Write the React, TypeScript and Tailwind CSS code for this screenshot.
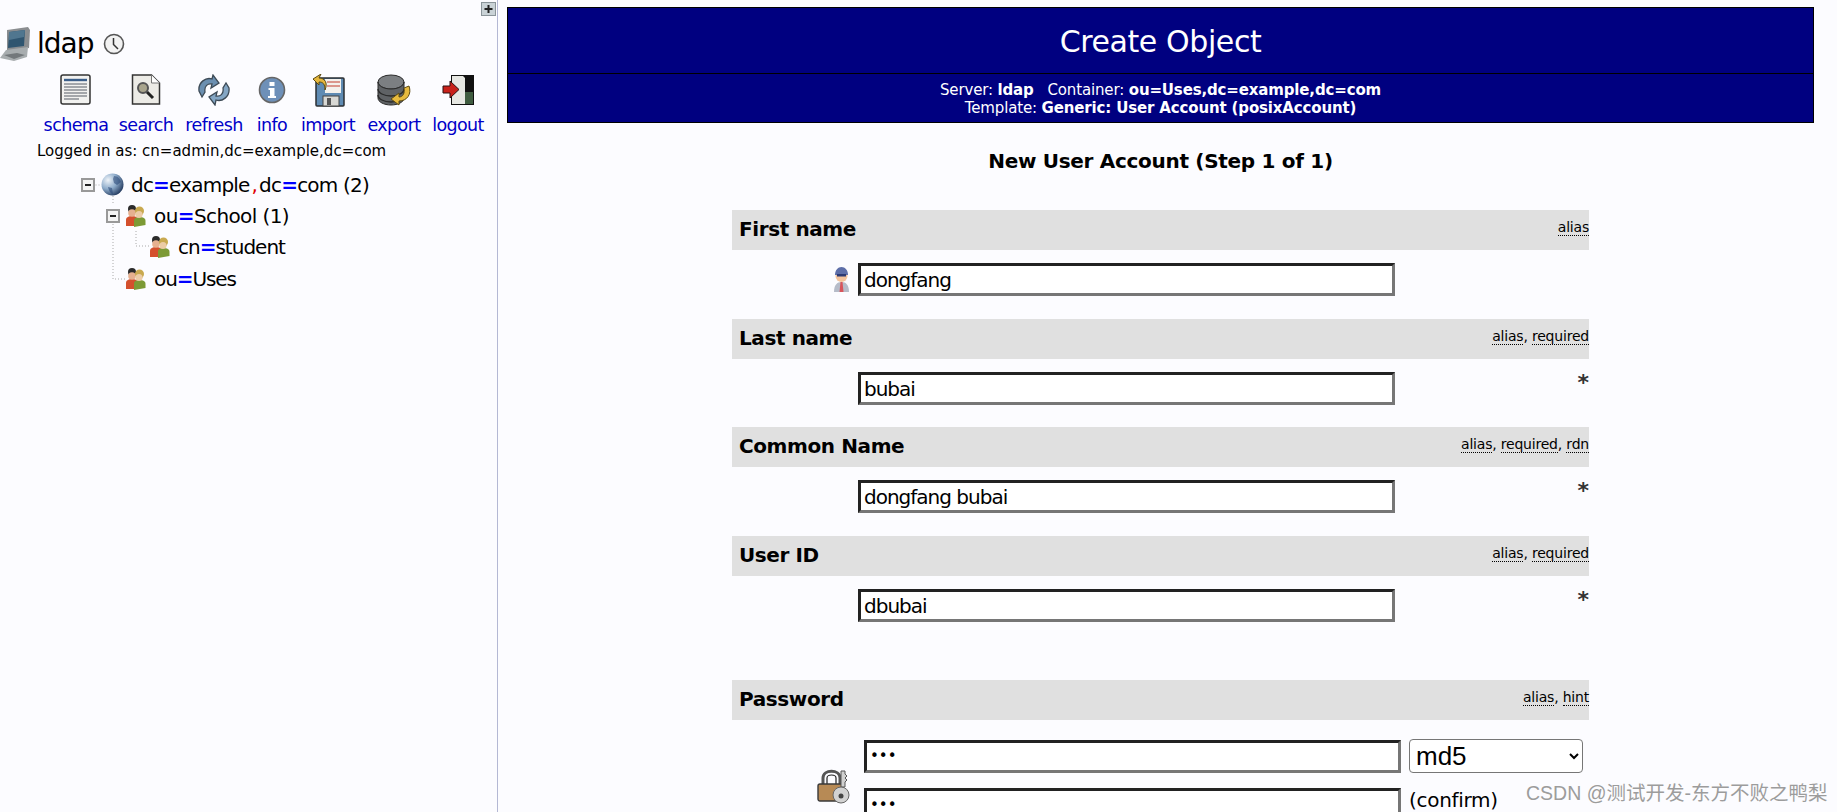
const sans = "font-['DejaVu_Sans',sans-serif]";

function PlusBox() {
  return (
    <svg width="15" height="14" viewBox="0 0 15 14">
      <rect x="0.5" y="0.5" width="14" height="13" fill="#c9d2d6" stroke="#8a9499" />
      <path d="M7.5 3v8M3.5 7h8" stroke="#222" strokeWidth="2" />
    </svg>
  );
}

function Computer() {
  return (
    <svg width="31" height="36" viewBox="0 0 31 36">
      <path d="M7 4 28 1 30 4 29 22 7 25Z" fill="#8a8d90" />
      <path d="M9 6 25 4 24 20 8 22Z" fill="#2f5570" />
      <path d="M9 6 25 4 24 11 9 14Z" fill="#50768f" />
      <path d="M6 24 28 21 27 31 14 35 0 32Z" fill="#a8adaf" />
      <path d="M4 29 17 27 25 29 14 33Z" fill="#73787b" />
    </svg>
  );
}

function Clock() {
  return (
    <svg width="22" height="22" viewBox="0 0 22 22">
      <circle cx="11" cy="11" r="9.500" fill="#f2f2f2" stroke="#555" strokeWidth="1.6" />
      <path d="M10.500 5v6.500l4.500 4.500" fill="none" stroke="#333" strokeWidth="1.5" />
    </svg>
  );
}

function SchemaIcon() {
  return (
    <svg width="32" height="32" viewBox="0 0 32 32">
      <rect x="1" y="1" width="29" height="29" rx="2" fill="#f2f2f0" stroke="#333" strokeWidth="1.5" />
      <path d="M4 6h23" stroke="#3b5f8a" strokeWidth="2.4" />
      <path d="M4 10h23M4 13h23M4 16h23M4 19h23M4 22h23M4 25h15" stroke="#8b8f94" strokeWidth="1.4" />
    </svg>
  );
}

function SearchIcon() {
  return (
    <svg width="30" height="32" viewBox="0 0 30 32">
      <path d="M1.500 1h19l8 8v21h-27Z" fill="#ecebe6" stroke="#333" strokeWidth="1.5" />
      <path d="M20.500 1v8h8" fill="#fff" stroke="#777" />
      <circle cx="12" cy="14" r="5" fill="#a8a48c" stroke="#555" strokeWidth="2" />
      <path d="m16 18 6 6" stroke="#222" strokeWidth="3" />
    </svg>
  );
}

function RefreshIcon() {
  return (
    <svg width="34" height="32" viewBox="0 0 34 32">
      <path d="M2 17C1 8 9 3 15 5l1-4 6 8-8 5 1-4c-4-1-8 2-7 8l-3 5Z" fill="#6b8fb0" stroke="#3d4a55" strokeWidth="1.3" />
      <path d="M32 14c1 9-7 14-13 12l-1 5-6-8 8-5-1 4c4 1 8-2 7-8l3-5Z" fill="#84a6c4" stroke="#3d4a55" strokeWidth="1.3" />
    </svg>
  );
}

function InfoIcon() {
  return (
    <svg width="28" height="28" viewBox="0 0 28 28">
      <circle cx="14" cy="14" r="12.500" fill="#6e90b8" stroke="#666" strokeWidth="1.6" />
      <rect x="11.500" y="6" width="5" height="4" fill="#fff" />
      <path d="M10.500 12h6v8h1.500v2h-8v-2h2v-6h-1.500Z" fill="#fff" />
    </svg>
  );
}

function ImportIcon() {
  return (
    <svg width="33" height="33" viewBox="0 0 33 33">
      <rect x="4" y="4" width="28" height="28" rx="1" fill="#5f8bb3" stroke="#2b2f33" strokeWidth="1.5" />
      <rect x="13" y="5" width="16" height="14" fill="#f4f1ec" />
      <path d="M15 8h13M15 12h13" stroke="#d27a6c" strokeWidth="1.6" />
      <rect x="11" y="22" width="16" height="10" fill="#d8d8d4" stroke="#444" />
      <rect x="15" y="24" width="4" height="7" fill="#555" />
      <path d="M9 0 1 5l6 6V8c4 0 6 2 6 8 3-7 0-12-6-12Z" fill="#e5b73d" stroke="#5c4a12" />
    </svg>
  );
}

function ExportIcon() {
  return (
    <svg width="34" height="33" viewBox="0 0 34 33">
      <ellipse cx="14" cy="8" rx="13" ry="7" fill="#7c7f82" stroke="#2b2b2b" />
      <path d="M1 8v16c0 4 6 7 13 7s13-3 13-7V8c0 4-6 7-13 7S1 12 1 8Z" fill="#5f6265" stroke="#2b2b2b" />
      <path d="M1 15c0 4 6 7 13 7s13-3 13-7M1 21c0 4 6 7 13 7s13-3 13-7" fill="none" stroke="#2b2b2b" strokeWidth="1.4" />
      <path d="M32 12c3 8-2 15-10 15v4l-8-6 8-6v4c4 0 6-4 5-9Z" fill="#e7ba3e" stroke="#5c4a12" />
    </svg>
  );
}

function LogoutIcon() {
  return (
    <svg width="33" height="32" viewBox="0 0 33 32">
      <rect x="9" y="1" width="23" height="30" fill="#111" />
      <path d="M22 18h9v12h-9Z" fill="#3f5c40" />
      <path d="M10 2h11l2 2v26H10Z" fill="#e6e7e2" />
      <path d="M1 12h7V7l9 8.500-9 8.500v-5H1Z" fill="#c8211a" stroke="#2b1010" />
    </svg>
  );
}

function MinusBox() {
  return (
    <svg className="shrink-0" width="14" height="14" viewBox="0 0 14 14">
      <rect x="1" y="1" width="12" height="12" fill="#f4f4f4" stroke="#999" strokeWidth="2" />
      <path d="M4 7h6" stroke="#222" strokeWidth="2" />
    </svg>
  );
}

function Globe() {
  return (
    <svg className="shrink-0" width="23" height="23" viewBox="0 0 23 23">
      <defs>
        <radialGradient id="g" cx="30%" cy="30%" r="80%">
          <stop offset="0" stopColor="#eef3f8" />
          <stop offset="0.5" stopColor="#8eaccb" />
          <stop offset="1" stopColor="#1d3358" />
        </radialGradient>
      </defs>
      <circle cx="11.500" cy="11.500" r="11" fill="url(#g)" />
      <path d="M13 3c4 0 6 3 7 6l-4 3-3-2-1-4ZM7 14l4 1 1 6c-2 0-4-3-5-7Z" fill="#2c4a78" opacity="0.6" />
    </svg>
  );
}

function People() {
  return (
    <svg className="shrink-0" width="21" height="22" viewBox="0 0 21 22">
      <path d="M1 21v-6c0-3 3-4 6-4s6 1 6 4v6Z" fill="#d4502d" />
      <path d="M9 22v-6c0-3 2-4 5.500-4s6 1 6 4v4Z" fill="#7c9a35" />
      <circle cx="7" cy="4" r="4" fill="#2b2b2b" />
      <circle cx="7" cy="8" r="3.800" fill="#e6b08f" />
      <circle cx="14.500" cy="6" r="4.500" fill="#c9a94f" />
      <circle cx="14" cy="9.500" r="3.600" fill="#eccca6" />
    </svg>
  );
}

function UserIcon() {
  return (
    <svg width="19" height="25" viewBox="0 0 19 25">
      <path d="M2 25c0-7 3-10 7.500-10s7.500 3 7.500 10Z" fill="#b6bcc9" />
      <path d="M8.500 15h2l1 10h-4Z" fill="#d8555c" />
      <circle cx="9.500" cy="9" r="6" fill="#f3c39c" />
      <path d="M3 8c0-5 3-8 6.500-8S16 3 16 8Z" fill="#5d6ea8" />
      <rect x="5" y="7" width="9" height="2.500" fill="#2d3a72" />
    </svg>
  );
}

function LockIcon() {
  return (
    <svg width="34" height="35" viewBox="0 0 34 35">
      <path d="M6 16V9c0-9 17-9 17 0v7" fill="none" stroke="#555" strokeWidth="3" />
      <path d="M10 16V9c0-4 9-4 9 0v7" fill="none" stroke="#222" strokeWidth="1.2" />
      <rect x="1" y="15" width="25" height="17" rx="2" fill="#b78a55" stroke="#3a3a3a" strokeWidth="1.4" />
      <path d="M24 2h4v3l2 2-2 2 2 2-2 2v5h-4Z" fill="#d0d0d0" stroke="#555" />
      <circle cx="24" cy="26" r="8" fill="#d2d2d2" stroke="#666" />
      <circle cx="24" cy="27" r="2.500" fill="#444" />
    </svg>
  );
}

function Tag({ children }: { children: string }) {
  return <span className="border-b border-dotted border-black leading-[14px]">{children}</span>;
}

function Eq() {
  return <span className="text-[#0000ff] font-bold">=</span>;
}

function ToolItem({ icon, label, w }: { icon: React.ReactNode; label: string; w: string }) {
  return (
    <a className={`flex flex-col items-center ${w}`}>
      <span className="h-[36px] flex items-center justify-center">{icon}</span>
      <span className="text-[17.5px] leading-[24px] mt-[5px] text-[#0000c8] tracking-[-0.6px]">{label}</span>
    </a>
  );
}

function Section({ title, tags, value, star, icon, mt }: { title: string; tags: string[]; value: string; star?: boolean; icon?: React.ReactNode; mt: string }) {
  return (
    <div className={mt}>
      <div className="h-[40px] bg-[#e0e0e0] flex items-center justify-between pl-[7px]">
        <span className="font-bold text-[20px] tracking-[-0.4px] -mt-[2px]">{title}</span>
        <span className="text-[14px] tracking-[-0.2px] -mt-[6px]">
          {tags.map((t, i) => (
            <span key={t}>
              {i > 0 && ", "}
              <Tag>{t}</Tag>
            </span>
          ))}
        </span>
      </div>
      <div className="flex mt-[13px] h-[33px]">
        <div className="w-[126px] flex justify-end pr-[7px] items-center shrink-0">{icon}</div>
        <input
          readOnly
          value={value}
          className="w-[537px] h-[33px] border-3 border-t-[#222] border-l-[#222] border-r-[#767676] border-b-[#767676] bg-white px-[3px] text-[20px] tracking-[-1px] outline-none"
        />
        {star && <span className="ml-auto text-[22px] leading-[22px] font-bold text-[#333]">*</span>}
      </div>
    </div>
  );
}

export default function App() {
  return (
    <div className={`${sans} relative flex h-[812px] w-[1837px] overflow-hidden bg-[#fcfcff] text-black`}>
      <aside className="w-[498px] shrink-0 border-r border-[#b4b8d4] relative">
        <div className="flex justify-end pt-[2px] pr-[1px]">
          <PlusBox />
        </div>
        <div className="flex items-center h-[36px] mt-[10px]">
          <Computer />
          <span className="text-[28px] ml-[6px] tracking-[-1px]">ldap</span>
          <span className="ml-[10px]"><Clock /></span>
        </div>
        <div className="flex mt-[10px] pl-[39px]">
          <ToolItem w="w-[74px]" icon={<SchemaIcon />} label="schema" />
          <ToolItem w="w-[66px]" icon={<SearchIcon />} label="search" />
          <ToolItem w="w-[70px]" icon={<RefreshIcon />} label="refresh" />
          <ToolItem w="w-[46px]" icon={<InfoIcon />} label="info" />
          <ToolItem w="w-[66px]" icon={<ImportIcon />} label="import" />
          <ToolItem w="w-[66px]" icon={<ExportIcon />} label="export" />
          <ToolItem w="w-[62px]" icon={<LogoutIcon />} label="logout" />
        </div>
        <div className="pl-[37px] text-[15px] leading-[20px] mt-[4px]">Logged in as: cn=admin,dc=example,dc=com</div>
        <div className="relative mt-[8px] text-[20px] tracking-[-0.8px]">
          <svg className="absolute left-0 top-0" width="200" height="130">
            <path d="M95.500 16H101M113 27V36M113 52V110H125M136 62V77H150" fill="none" stroke="#aaa" strokeDasharray="1 2" />
          </svg>
          <div className="relative flex items-center h-[31px] pl-[81px]">
            <MinusBox />
            <span className="ml-[6px]"><Globe /></span>
            <span className="ml-[7px]">dc<Eq />example<span className="text-[#e00000] mx-[2px]">,</span>dc<Eq />com (2)</span>
          </div>
          <div className="relative flex items-center h-[31px] pl-[106px]">
            <MinusBox />
            <span className="ml-[5px]"><People /></span>
            <span className="ml-[8px] tracking-[-0.6px]">ou<Eq />School (1)</span>
          </div>
          <div className="relative flex items-center h-[32px] pl-[149px]">
            <People />
            <span className="ml-[8px] tracking-[-1px]">cn<Eq />student</span>
          </div>
          <div className="relative flex items-center h-[31px] pl-[125px]">
            <People />
            <span className="ml-[8px] tracking-[-1.1px]">ou<Eq />Uses</span>
          </div>
        </div>
      </aside>

      <main className="flex-1 pt-[7px] pl-[9px] pr-[23px]">
        <div className="bg-[#000080] border border-black text-white text-center">
          <div className="h-[66px] border-b border-black flex items-center justify-center text-[30px] tracking-[-0.4px] pt-[2px]">Create Object</div>
          <div className="h-[48px] pt-[7px] text-[15px] leading-[18px] tracking-[-0.15px]">
            <div>Server: <b>ldap</b> &nbsp; Container: <b>ou=Uses,dc=example,dc=com</b></div>
            <div>Template: <b>Generic: User Account (posixAccount)</b></div>
          </div>
        </div>
        <h3 className="text-center font-bold text-[20px] leading-[24px] mt-[26px] tracking-[-0.3px]">New User Account (Step 1 of 1)</h3>
        <div className="mx-auto w-[857px]">
          <Section mt="mt-[37px]" title="First name" tags={["alias"]} value="dongfang" icon={<UserIcon />} />
          <Section mt="mt-[23px]" title="Last name" tags={["alias", "required"]} value="bubai" star />
          <Section mt="mt-[22px]" title="Common Name" tags={["alias", "required", "rdn"]} value="dongfang bubai" star />
          <Section mt="mt-[23px]" title="User ID" tags={["alias", "required"]} value="dbubai" star />
          <div className="mt-[58px]">
            <div className="h-[40px] bg-[#e0e0e0] flex items-center justify-between pl-[7px]">
              <span className="font-bold text-[20px] tracking-[-0.4px] -mt-[2px]">Password</span>
              <span className="text-[14px] tracking-[-0.2px] -mt-[6px]"><Tag>alias</Tag>, <Tag>hint</Tag></span>
            </div>
            <div className="flex mt-[19px]">
              <div className="w-[132px] shrink-0 flex justify-end pr-[13px] pt-[30px]"><LockIcon /></div>
              <div className="flex flex-col gap-[15px]">
                <div className="flex items-center gap-[8px]">
                  <input readOnly type="password" value="123" className="w-[537px] h-[33px] border-3 border-t-[#222] border-l-[#222] border-r-[#767676] border-b-[#767676] bg-white px-[3px] text-[15px] outline-none" />
                  <select defaultValue="md5" className="w-[174px] h-[34px] rounded-[4px] border border-[#767676] bg-white pl-[2px] text-[26px] font-['Liberation_Sans',sans-serif]">
                    <option>md5</option>
                  </select>
                </div>
                <div className="flex items-start gap-[8px]">
                  <input readOnly type="password" value="123" className="w-[537px] h-[33px] border-3 border-t-[#222] border-l-[#222] border-r-[#767676] border-b-[#767676] bg-white px-[3px] text-[15px] outline-none" />
                  <span className="text-[20px] leading-[24px] tracking-[-0.3px]">(confirm)</span>
                </div>
              </div>
            </div>
          </div>
        </div>
      </main>

      <div className="absolute left-[1526px] top-[781px] text-[19.5px] leading-[24px] text-[#9c9c9c] font-['Liberation_Sans','Noto_Sans_CJK_SC',sans-serif]">CSDN @测试开发-东方不败之鸭梨</div>
    </div>
  );
}
